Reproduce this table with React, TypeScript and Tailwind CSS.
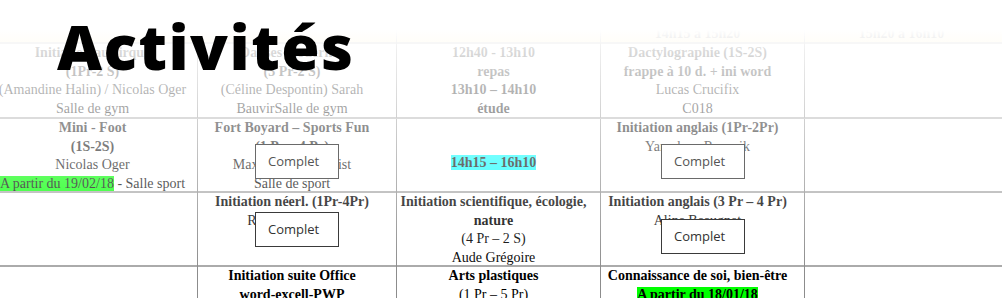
import React from "react";

type Line = { t: React.ReactNode; b?: boolean };

const Cell = ({
  lines = [],
  pt = "pt-0",
  children,
}: {
  lines?: Line[];
  pt?: string;
  children?: React.ReactNode;
}) => (
  <div className={`relative border-r border-[#8c8c8c] pr-[10px] text-center ${pt}`}>
    {lines.map((l, i) => (
      <div key={i} className={`whitespace-nowrap ${l.b ? "font-bold" : ""}`}>
        {l.t}
      </div>
    ))}
    {children}
  </div>
);

const Complet = ({ pos, tone }: { pos: string; tone: string }) => (
  <div
    className={`absolute z-10 ${pos} w-[84px] h-[35px] bg-white border flex items-center pl-[12px] font-['Open_Sans',sans-serif] text-[13px] leading-none text-left ${tone}`}
  >
    Complet
  </div>
);

const rowCls =
  "grid grid-cols-[200px_199px_204px_204px_204px] border-b-2 border-[#a9a9a9]";

export default function App() {
  return (
    <div className="relative w-[1002px] h-[298px] overflow-hidden bg-white">
      <div className="pt-[24px] -ml-[2px] w-max font-['Liberation_Serif',serif] text-[14px] leading-[18.5px] text-black">
        {/* header row */}
        <div className={`${rowCls} h-[20px] bg-[#ffeeb8]`}>
          <Cell />
          <Cell />
          <Cell />
          <Cell pt="pt-[1px]" lines={[{ t: "14h15 à 15h20", b: true }]} />
          <Cell pt="pt-[1px]" lines={[{ t: "15h20 à 16h10", b: true }]} />
        </div>
        {/* row 1 */}
        <div className={`${rowCls} h-[75px]`}>
          <Cell
            lines={[
              { t: "Initiation au cirque", b: true },
              { t: "(1Pr-2 S)", b: true },
              { t: "(Amandine Halin) / Nicolas Oger" },
              { t: "Salle de gym" },
            ]}
          />
          <Cell
            lines={[
              { t: "Danses modernes", b: true },
              { t: "(3 Pr-2 S)", b: true },
              { t: "(Céline  Despontin) Sarah" },
              { t: "BauvirSalle de gym" },
            ]}
          />
          <Cell
            lines={[
              { t: "12h40 - 13h10", b: true },
              { t: "repas", b: true },
              { t: "13h10 – 14h10", b: true },
              { t: "étude", b: true },
            ]}
          />
          <Cell
            lines={[
              { t: "Dactylographie (1S-2S)", b: true },
              { t: "frappe à 10 d. + ini word", b: true },
              { t: "Lucas Crucifix" },
              { t: "C018" },
            ]}
          />
          <Cell />
        </div>
        {/* row 2 */}
        <div className={`${rowCls} h-[74px]`}>
          <Cell
            lines={[
              { t: "Mini - Foot", b: true },
              { t: "(1S-2S)", b: true },
              { t: "Nicolas Oger" },
              {
                t: (
                  <>
                    <span className="bg-[#00ff00]">A partir du 19/02/18</span> - Salle sport
                  </>
                ),
              },
            ]}
          />
          <Cell
            lines={[
              { t: "Fort Boyard – Sports Fun", b: true },
              { t: "(1 Pr – 4 Pr)", b: true },
              { t: "Maxime Vandenhaist" },
              { t: "Salle de sport" },
            ]}
          >
            <Complet pos="left-[57px] top-[25px]" tone="border-[#6a6a6a] text-[#555]" />
          </Cell>
          <Cell pt="pt-[35px]">
            <div className="font-bold">
              <span className="bg-[#00ffff]">14h15 – 16h10</span>
            </div>
          </Cell>
          <Cell
            lines={[
              { t: "Initiation anglais (1Pr-2Pr)", b: true },
              { t: "Yaroslava Ryaznik" },
            ]}
          >
            <Complet pos="left-[60px] top-[25px]" tone="border-[#6a6a6a] text-[#555]" />
          </Cell>
          <Cell />
        </div>
        {/* row 3 */}
        <div className={`${rowCls} h-[74px]`}>
          <Cell />
          <Cell
            lines={[
              { t: "Initiation néerl. (1Pr-4Pr)", b: true },
              { t: "Rita Vandamme" },
            ]}
          >
            <Complet pos="left-[57px] top-[19px]" tone="border-[#3a3a3a] text-[#333]" />
          </Cell>
          <Cell
            lines={[
              { t: "Initiation scientifique, écologie,", b: true },
              { t: "nature", b: true },
              { t: "(4 Pr – 2 S)" },
              { t: "Aude Grégoire" },
            ]}
          />
          <Cell
            lines={[
              { t: "Initiation anglais (3 Pr – 4 Pr)", b: true },
              { t: "Aline Beaugnet" },
            ]}
          >
            <Complet pos="left-[60px] top-[26px]" tone="border-[#3a3a3a] text-[#333]" />
          </Cell>
          <Cell />
        </div>
        {/* row 4 */}
        <div className="grid grid-cols-[200px_199px_204px_204px_204px] h-[40px]">
          <Cell />
          <Cell
            lines={[
              { t: "Initiation suite Office", b: true },
              { t: "word-excell-PWP", b: true },
            ]}
          />
          <Cell
            lines={[{ t: "Arts plastiques", b: true }, { t: "(1 Pr – 5 Pr)" }]}
          />
          <Cell
            lines={[
              { t: "Connaissance de soi, bien-être", b: true },
              {
                t: <span className="bg-[#00ff00]">A partir du 18/01/18</span>,
                b: true,
              },
            ]}
          />
          <Cell />
        </div>
      </div>

      {/* fade overlay */}
      <div className="pointer-events-none absolute inset-0 bg-[linear-gradient(to_bottom,#ffffff_30px,rgba(255,255,255,0.86)_50px,rgba(255,255,255,0)_272px)]" />

      <h1 className="absolute left-[57px] top-[15px] font-['Open_Sans',sans-serif] text-[62px] font-extrabold leading-none tracking-[1.5px] text-black z-20">
        Activités
      </h1>
    </div>
  );
}
